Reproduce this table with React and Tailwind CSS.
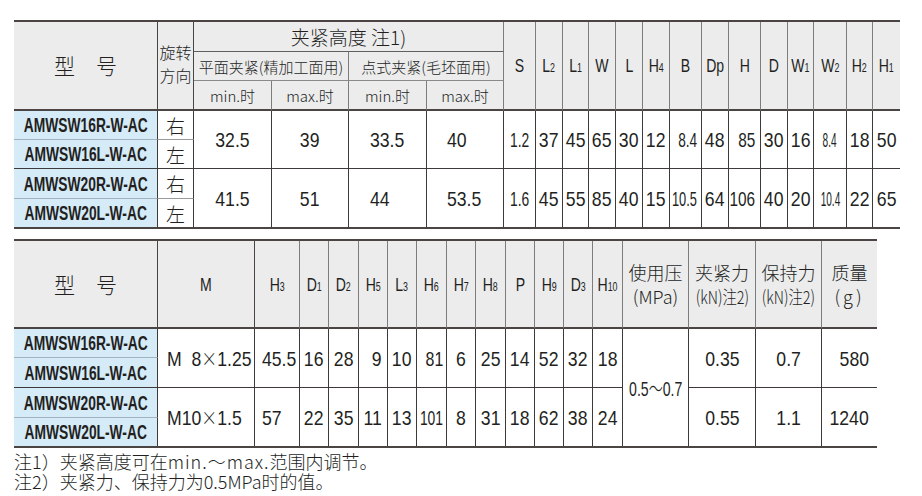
import React from "react";

const LAT = "font-['Liberation_Sans',Arial,sans-serif]";
const CJK = "font-['Noto_Sans_CJK_SC','Noto_Sans_CJK_JP',sans-serif] font-light";
const HB = "bg-[#ececec]";
const HV = "border-r border-r-[#7d7d7d]";
const HBOT = "border-b-2 border-b-[#4a4443]";
const BV = "border-r border-r-[#3e3a39]";
const BBOT = "border-b border-b-[#3e3a39]";
const MB = "bg-[#d5ebf7] border-r border-r-[#3e3a39]";

function C({ className = "", children }) {
  return (
    <div className={`flex items-center justify-center whitespace-nowrap ${className}`}>
      {children}
    </div>
  );
}

function N({ children, s = "scale-x-[0.84]", o = "" }) {
  return (
    <span className={`inline-block ${LAT} text-[21px] leading-none ${s} ${o}`}>{children}</span>
  );
}

function HL({ m, sub, s = "scale-x-[0.74]" }) {
  return (
    <span className={`inline-block ${LAT} text-[19px] leading-none ${s}`}>
      {m}
      {sub ? <span className="text-[12px]">{sub}</span> : null}
    </span>
  );
}

function Model({ children }) {
  return (
    <span className={`inline-block ${LAT} font-bold text-[20px] leading-none scale-x-[0.69]`}>
      {children}
    </span>
  );
}

function K({ children, className = "text-[19px]" }) {
  return <span className={`${CJK} leading-none ${className}`}>{children}</span>;
}

const T1HEAD = [
  ["S"], ["L", "2"], ["L", "1"], ["W"], ["L"], ["H", "4"], ["B"], ["Dp"], ["H"], ["D"],
  ["W", "1"], ["W", "2"], ["H", "2"], ["H", "1"],
];

const T1COLS = [
  { c: "", o: "" },
  { c: "", o: "" },
  { c: "justify-start pl-[21px]", o: "origin-left" },
  { c: "justify-start pl-[20px]", o: "origin-left" },
  { c: "", o: "", s: ["scale-x-[0.66]", "scale-x-[0.66]"] },
  { c: "", o: "" },
  { c: "", o: "" },
  { c: "", o: "" },
  { c: "", o: "" },
  { c: "", o: "" },
  { c: "justify-end pr-[4px]", o: "origin-right", s: ["scale-x-[0.65]", "scale-x-[0.61]"] },
  { c: "", o: "" },
  { c: "justify-end pr-[5px]", o: "origin-right", s: ["scale-x-[0.73]", "scale-x-[0.73]"] },
  { c: "", o: "" },
  { c: "", o: "" },
  { c: "", o: "", s: ["scale-x-[0.48]", "scale-x-[0.48]"] },
  { c: "", o: "" },
  { c: "", o: "" },
];

const T1R1 = ["32.5", "39", "33.5", "40", "1.2", "37", "45", "65", "30", "12", "8.4", "48", "85", "30", "16", "8.4", "18", "50"];
const T1R2 = ["41.5", "51", "44", "53.5", "1.6", "45", "55", "85", "40", "15", "10.5", "64", "106", "40", "20", "10.4", "22", "65"];

function Table1() {
  return (
    <div className="grid w-[886px] grid-cols-[144px_36px_78px_77px_78px_77px_32px_27px_26px_27px_27px_27px_32px_27px_32px_27px_26px_33px_26px_27px] grid-rows-[30px_29px_30px_29px_29px_30px_28px] border-y-2 border-y-[#4a4443]">
      {/* header row 1 */}
      <C className={`row-span-3 ${HB} border-r border-r-[#4a4443] ${HBOT}`}>
        <K className="text-[21px]">型　号</K>
      </C>
      <C className={`row-span-3 ${HB} border-r border-r-[#4a4443] ${HBOT} pb-[4px]`}>
        <div className={`${CJK} text-[16px] leading-[23px] text-center`}>
          旋转
          <br />
          方向
        </div>
      </C>
      <C className={`col-span-4 ${HB} ${HV} border-b border-b-[#5f5f5f]`}>
        <K className="text-[19px]">夹紧高度 注1)</K>
      </C>
      {T1HEAD.map((h, i) => (
        <C key={i} className={`row-span-3 ${HB} ${HBOT} ${i < 13 ? HV : ""}`}>
          <HL m={h[0]} sub={h[1]} />
        </C>
      ))}
      {/* header row 2 */}
      <C className={`col-span-2 ${HB} ${HV} border-b border-b-[#8a8a8a]`}>
        <K className="text-[15px]">平面夹紧(精加工面用)</K>
      </C>
      <C className={`col-span-2 ${HB} ${HV} border-b border-b-[#8a8a8a]`}>
        <K className="text-[15px]">点式夹紧(毛坯面用)</K>
      </C>
      {/* header row 3 */}
      {["min.时", "max.时", "min.时", "max.时"].map((t, i) => (
        <C key={i} className={`${HB} ${HV} ${HBOT}`}>
          <K className="text-[15px]">{t}</K>
        </C>
      ))}
      {/* body row 1 */}
      <C className={`${MB} border-b border-b-[#a3b3bd]`}>
        <Model>AMWSW16R-W-AC</Model>
      </C>
      <C className={`${BV} border-b border-b-[#9a9a9a]`}>
        <K>右</K>
      </C>
      {T1R1.map((v, i) => (
        <C key={i} className={`row-span-2 ${BBOT} ${i < 17 ? BV : ""} ${T1COLS[i].c}`}>
          <N s={T1COLS[i].s ? T1COLS[i].s[0] : "scale-x-[0.84]"} o={T1COLS[i].o}>
            {v}
          </N>
        </C>
      ))}
      {/* body row 2 */}
      <C className={`${MB} ${BBOT}`}>
        <Model>AMWSW16L-W-AC</Model>
      </C>
      <C className={`${BV} ${BBOT}`}>
        <K>左</K>
      </C>
      {/* body row 3 */}
      <C className={`${MB} border-b border-b-[#a3b3bd]`}>
        <Model>AMWSW20R-W-AC</Model>
      </C>
      <C className={`${BV} border-b border-b-[#9a9a9a]`}>
        <K>右</K>
      </C>
      {T1R2.map((v, i) => (
        <C key={i} className={`row-span-2 ${i < 17 ? BV : ""} ${T1COLS[i].c}`}>
          <N s={T1COLS[i].s ? T1COLS[i].s[1] : "scale-x-[0.84]"} o={T1COLS[i].o}>
            {v}
          </N>
        </C>
      ))}
      {/* body row 4 */}
      <C className={`${MB}`}>
        <Model>AMWSW20L-W-AC</Model>
      </C>
      <C className={`${BV}`}>
        <K>左</K>
      </C>
    </div>
  );
}

const T2HEAD = [
  ["M"], ["H", "3"], ["D", "1"], ["D", "2"], ["H", "5"], ["L", "3"], ["H", "6"], ["H", "7"],
  ["H", "8"], ["P"], ["H", "9"], ["D", "3"], ["H", "10"],
];

const T2COLS = [
  { c: "", o: "" }, // D1
  { c: "", o: "" }, // D2
  { c: "justify-end pr-[5px]", o: "origin-right" }, // H5
  { c: "", o: "" }, // L3
  { c: "justify-end pr-[3px]", o: "origin-right", s: ["scale-x-[0.76]", "scale-x-[0.66]"] }, // H6
  { c: "", o: "" }, // H7
  { c: "", o: "" }, // H8
  { c: "", o: "" }, // P
  { c: "", o: "" }, // H9
  { c: "", o: "" }, // D3
  { c: "", o: "" }, // H10
];
const T2R1 = ["16", "28", "9", "10", "81", "6", "25", "14", "52", "32", "18"];
const T2R2 = ["22", "35", "11", "13", "101", "8", "31", "18", "62", "38", "24"];

function Table2() {
  return (
    <div className="mt-[10px] grid w-[863px] grid-cols-[144px_97px_45px_29px_30px_29px_29px_30px_29px_30px_29px_29px_29px_30px_66px_67px_66px_55px] grid-rows-[88px_29px_30px_30px_28px] border-y-2 border-y-[#4a4443]">
      {/* header */}
      <C className={`${HB} border-r border-r-[#4a4443] ${HBOT}`}>
        <K className="text-[21px]">型　号</K>
      </C>
      {T2HEAD.map((h, i) => (
        <C key={i} className={`${HB} ${HBOT} ${i === 0 ? "border-r border-r-[#4a4443]" : HV}`}>
          <HL m={h[0]} sub={h[1]} />
        </C>
      ))}
      <C className={`${HB} ${HBOT} ${HV}`}>
        <div className={`${CJK} text-[18px] leading-[24px] text-center`}>
          使用压
          <br />
          (MPa)
        </div>
      </C>
      <C className={`${HB} ${HBOT} ${HV}`}>
        <div className={`${CJK} text-[18px] leading-[24px] text-center`}>
          夹紧力
          <br />
          <span className="inline-block scale-x-[0.8]">(kN)注2)</span>
        </div>
      </C>
      <C className={`${HB} ${HBOT} ${HV}`}>
        <div className={`${CJK} text-[18px] leading-[24px] text-center`}>
          保持力
          <br />
          <span className="inline-block scale-x-[0.8]">(kN)注2)</span>
        </div>
      </C>
      <C className={`${HB} ${HBOT}`}>
        <div className={`${CJK} text-[18px] leading-[24px] text-center`}>
          质量
          <br />
          <span className="tracking-[3px]">(g)</span>
        </div>
      </C>

      {/* body row 1 */}
      <C className={`${MB} border-b border-b-[#a3b3bd]`}>
        <Model>AMWSW16R-W-AC</Model>
      </C>
      <C className={`row-span-2 ${BV} ${BBOT} justify-start pl-[9px]`}>
        <span className={`inline-block ${LAT} text-[21px] leading-none scale-x-[0.84] origin-left`}>
          M<span className="invisible">1</span>8<span className={`${CJK} text-[19px]`}>×</span>1.25
        </span>
      </C>
      <C className={`row-span-2 ${BV} ${BBOT} justify-start pl-[7px]`}>
        <N o="origin-left">45.5</N>
      </C>
      {T2R1.map((v, i) => (
        <C key={i} className={`row-span-2 ${BV} ${BBOT} ${T2COLS[i].c}`}>
          <N s={T2COLS[i].s ? T2COLS[i].s[0] : "scale-x-[0.84]"} o={T2COLS[i].o}>
            {v}
          </N>
        </C>
      ))}
      <C className={`row-span-4 ${BV}`}>
        <span className={`inline-block ${LAT} text-[21px] leading-none scale-x-[0.67]`}>
          0.5<span className={`${CJK} text-[21px]`}>～</span>0.7
        </span>
      </C>
      <C className={`row-span-2 ${BV} ${BBOT}`}>
        <N>0.35</N>
      </C>
      <C className={`row-span-2 ${BV} ${BBOT}`}>
        <N>0.7</N>
      </C>
      <C className={`row-span-2 ${BBOT} justify-end pr-[8px]`}>
        <N o="origin-right">580</N>
      </C>

      {/* body row 2 */}
      <C className={`${MB} ${BBOT}`}>
        <Model>AMWSW16L-W-AC</Model>
      </C>

      {/* body row 3 */}
      <C className={`${MB} border-b border-b-[#a3b3bd]`}>
        <Model>AMWSW20R-W-AC</Model>
      </C>
      <C className={`row-span-2 ${BV} justify-start pl-[9px]`}>
        <span className={`inline-block ${LAT} text-[21px] leading-none scale-x-[0.84] origin-left`}>
          M10<span className={`${CJK} text-[19px]`}>×</span>1.5
        </span>
      </C>
      <C className={`row-span-2 ${BV} justify-start pl-[7px]`}>
        <N o="origin-left">57</N>
      </C>
      {T2R2.map((v, i) => (
        <C key={i} className={`row-span-2 ${BV} ${T2COLS[i].c}`}>
          <N s={T2COLS[i].s ? T2COLS[i].s[1] : "scale-x-[0.84]"} o={T2COLS[i].o}>
            {v}
          </N>
        </C>
      ))}
      <C className={`row-span-2 ${BV}`}>
        <N>0.55</N>
      </C>
      <C className={`row-span-2 ${BV}`}>
        <N>1.1</N>
      </C>
      <C className={`row-span-2 justify-end pr-[8px]`}>
        <N o="origin-right">1240</N>
      </C>

      {/* body row 4 */}
      <C className={`${MB}`}>
        <Model>AMWSW20L-W-AC</Model>
      </C>
    </div>
  );
}

export default function App() {
  return (
    <div className="min-h-[496px] w-[922px] bg-white pl-[14px] pt-[20px] text-[#231f1e]">
      <Table1 />
      <Table2 />
      <div className={`mt-[3px] ${CJK} text-[18px] leading-[20px]`}>
        <div>
          注1）夹紧高度可在<span className="tracking-[1px]">min.～max.</span>范围内调节。
        </div>
        <div>注2）夹紧力、保持力为0.5MPa时的值。</div>
      </div>
    </div>
  );
}
